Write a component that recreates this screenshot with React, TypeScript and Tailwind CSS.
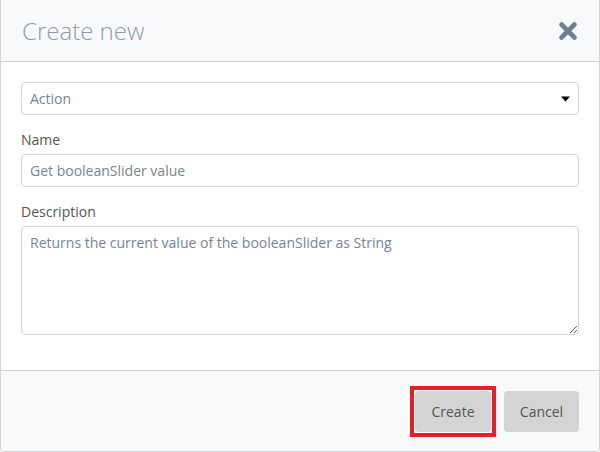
import React from "react";

export default function App() {
  return (
    <div className="w-[600px] h-[452px] bg-white font-['Open_Sans',sans-serif] text-[14px]">
      <div className="w-[600px] h-[452px] border-x border-b border-[#d3d3d3] rounded-b-[4px] flex flex-col overflow-hidden">
        <div className="h-[62px] bg-[#f8f9fb] border-b border-[#d3d3d3] flex items-center justify-between pl-[21px] pr-[20px]">
          <div className="text-[24px] font-light text-[#8d9cb0] leading-none">Create new</div>
          <svg width="20" height="20" viewBox="0 0 20 20" className="mr-[1px]">
            <path d="M3.5 3.5 L16.5 16.5 M16.5 3.5 L3.5 16.5" stroke="#6c7f95" strokeWidth="4.6" strokeLinecap="round" />
          </svg>
        </div>

        <div className="px-[20px] pt-[20px] pb-[20px]">
          <div className="h-[33px] border border-[#d6d6d6] rounded-[4px] flex items-center justify-between pl-[8px] pr-[8px] text-[#71859d]">
            <span>Action</span>
            <svg width="9" height="6" viewBox="0 0 9 6">
              <path d="M0 0.5 L9 0.5 L4.5 5.5 Z" fill="#000" />
            </svg>
          </div>

          <div className="mt-[15px] text-[#555] leading-[20px] mb-[4px]">Name</div>
          <input
            readOnly
            value="Get booleanSlider value"
            className="w-full h-[33px] border border-[#d6d6d6] rounded-[4px] px-[8px] text-[#71859d] outline-none"
          />

          <div className="mt-[15px] text-[#555] leading-[20px] mb-[4px]">Description</div>
          <textarea
            readOnly
            defaultValue="Returns the current value of the booleanSlider as String"
            className="block w-full h-[109px] border border-[#d6d6d6] rounded-[4px] px-[8px] py-[6px] leading-[20px] text-[#71859d] outline-none"
          />
          <div className="h-[15px]" />
        </div>

        <div className="flex-1 bg-[#f8f9fb] border-t border-[#d3d3d3] flex justify-end items-start gap-[13px] pt-[20px] pr-[20px]">
          <button className="relative w-[76px] h-[41px] bg-[#d4d4d4] rounded-[4px] text-[#555]">
            Create
            {/* annotation box */}
            <span className="absolute -inset-[5px] border-[4px] border-[#ed1c24]" />
          </button>
          <button className="w-[75px] h-[41px] bg-[#d4d4d4] rounded-[4px] text-[#555]">
            Cancel
          </button>
        </div>
      </div>
    </div>
  );
}
